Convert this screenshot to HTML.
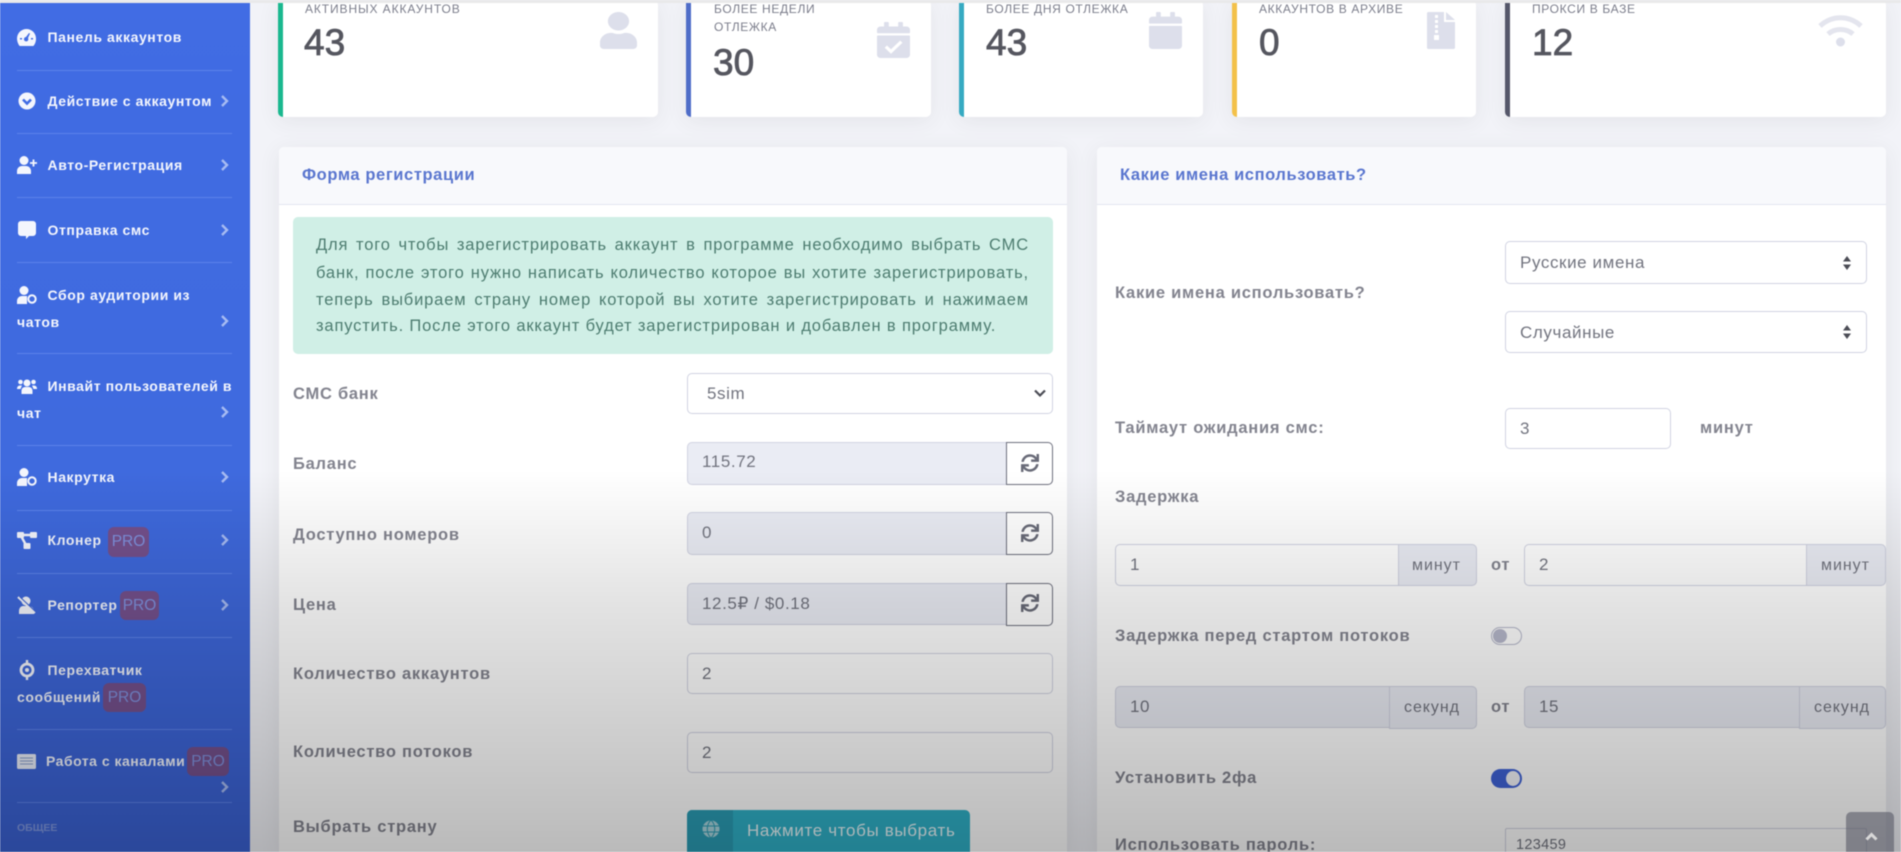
<!DOCTYPE html>
<html lang="ru"><head><meta charset="utf-8"><title>Панель</title>
<style>
*{box-sizing:border-box}
html,body{margin:0;padding:0;width:1901px;height:852px;overflow:hidden;background:#f3f4f8}
#r{position:absolute;left:0;top:0;width:1901px;height:852px;overflow:hidden;background:#f2f3f8;font-family:"Liberation Sans",sans-serif;filter:blur(.45px)}
#r div,#r svg{position:absolute}
.t{white-space:nowrap;line-height:20px;height:20px}
.sb{color:#f4f6fd;font-weight:700;font-size:14px;letter-spacing:.58px}
.dv{left:17px;width:215px;height:1px;background:#5c82ea}
.ch{left:220px;width:9px;height:14px}
.pro{background:#74508c;border-radius:6px;color:#7f92de;font-size:15.5px;text-align:center;line-height:29px}
.card{background:#fff;border-radius:5px;top:0;height:117px;box-shadow:0 4px 22px rgba(58,59,69,.08)}
.bar{left:0;top:0;width:5px;height:117px;border-radius:0 0 0 5px}
.lb{color:#7b7d8b;font-size:12px;letter-spacing:.65px}
.n{color:#55565f;font-size:37px;line-height:40px;height:40px;-webkit-text-stroke:.8px #55565f;white-space:nowrap}
.panel{background:#fff;border-radius:5px 5px 0 0;top:147px;height:705px;box-shadow:0 4px 22px rgba(58,59,69,.08)}
.ph{left:0;top:0;right:0;height:58px;background:#f8f9fc;border-bottom:1px solid #e3e6f0;border-radius:5px 5px 0 0}
.pt{color:#5a76cf;font-weight:700;font-size:16.5px;letter-spacing:.6px}
.l{color:#83848f;font-weight:700;font-size:16.5px;letter-spacing:.75px;margin-top:1px}
.inp{background:#fff;border:1px solid #d1d3e2;border-radius:5px}
.dis{background:#eaecf4}
.v{color:#72747f;font-size:17px;letter-spacing:.6px;margin-top:1px}
.rb{left:1006px;width:47px;background:#fff;border:1px solid #6e707e;border-radius:0 5px 5px 0}
.ad{background:#eaecf4;border:1px solid #d1d3e2;border-radius:0 5px 5px 0}
.a{color:#72747f;font-size:16px;letter-spacing:.95px;margin-top:1px}
.al{left:316px;width:713px;color:#4d7c70;font-size:16.5px;letter-spacing:.85px;text-align:justify;text-align-last:justify;white-space:nowrap;line-height:20px;height:20px;margin-top:1px}
</style></head><body>
<div id="r">
<div style="left:0;top:0;width:1901px;height:3px;background:#e9e9ea;z-index:5"></div>

<!-- sidebar -->
<div style="left:0;top:0;width:250px;height:852px;background:linear-gradient(180deg,#416ce4 0,#3f6ade 55%,#3b62d4 100%)"></div>
<div class="dv" style="top:70px"></div><div class="dv" style="top:133px"></div><div class="dv" style="top:197px"></div><div class="dv" style="top:262px"></div><div class="dv" style="top:353px"></div><div class="dv" style="top:445px"></div><div class="dv" style="top:510px"></div><div class="dv" style="top:573px"></div><div class="dv" style="top:637px"></div><div class="dv" style="top:729px"></div><div class="dv" style="top:802px"></div>

<svg style="left:17px;top:29px" width="19" height="17" viewBox="0 0 19 17"><path fill="#f4f6fd" d="M9.500 0A9.500 9.500 0 0 0 0 9.500c0 2.800 1 5.400 2.600 7.500h13.800A11 11 0 0 0 19 9.500 9.500 9.500 0 0 0 9.500 0z"/><path fill="#416ce4" d="M9 8l3-4 1 .5-2 4.500a2.200 2.200 0 1 1-2-1zM3 9h2v1.500H3zM14 9h2v1.500h-2z"/></svg>
<svg style="left:18px;top:92px" width="18" height="18" viewBox="0 0 18 18"><circle cx="9" cy="9" r="8.500" fill="#f4f6fd"/><path fill="none" stroke="#416ce4" stroke-width="2.600" d="M5 7.500l4 4 4-4"/></svg>
<svg style="left:17px;top:156px" width="20" height="18" viewBox="0 0 20 18"><circle cx="7" cy="4.500" r="4.500" fill="#f4f6fd"/><path fill="#f4f6fd" d="M0 18v-3c0-3 2.500-5 5-5h4c2.500 0 5 2 5 5v3z"/><path stroke="#f4f6fd" stroke-width="1.800" d="M13 7h7M16.500 3.500v7"/></svg>
<svg style="left:18px;top:221px" width="18" height="18" viewBox="0 0 18 18"><path fill="#f4f6fd" d="M3 0h12a3 3 0 0 1 3 3v9a3 3 0 0 1-3 3h-4l-3 3v-3H3a3 3 0 0 1-3-3V3a3 3 0 0 1 3-3z"/></svg>
<svg style="left:17px;top:286px" width="20" height="18" viewBox="0 0 20 18"><circle cx="7" cy="4.500" r="4.500" fill="#f4f6fd"/><path fill="#f4f6fd" d="M0 18v-3c0-3 2.500-5 5-5h5v8z"/><circle cx="15" cy="13" r="3.700" fill="none" stroke="#f4f6fd" stroke-width="2"/></svg>
<svg style="left:17px;top:378px" width="20" height="16" viewBox="0 0 20 16"><g fill="#f4f6fd"><circle cx="10" cy="5" r="3.500"/><circle cx="3.500" cy="4" r="2.300"/><circle cx="16.500" cy="4" r="2.300"/><path d="M4.500 16v-3c0-3 2-4 4-4h3c2 0 4 1 4 4v3zM0 11c0-2 1-3.500 3-3.500h2L3.500 11zM20 11c0-2-1-3.500-3-3.500h-2l1.500 3.500z"/></g></svg>
<svg style="left:17px;top:468px" width="20" height="18" viewBox="0 0 20 18"><circle cx="7" cy="4.500" r="4.500" fill="#f4f6fd"/><path fill="#f4f6fd" d="M0 18v-3c0-3 2.500-5 5-5h5v8z"/><circle cx="15" cy="13" r="3.700" fill="none" stroke="#f4f6fd" stroke-width="2"/></svg>
<svg style="left:17px;top:532px" width="20" height="17" viewBox="0 0 20 17"><g fill="#f4f6fd"><rect x="0" y="0" width="7" height="6" rx="1"/><rect x="13" y="0" width="7" height="6" rx="1"/><rect x="6.500" y="11" width="7" height="6" rx="1"/></g><path stroke="#f4f6fd" stroke-width="2.400" fill="none" d="M5 3h10M4 4l5 9"/></svg>
<svg style="left:17px;top:596px" width="20" height="18" viewBox="0 0 20 18"><circle cx="9" cy="5" r="4.500" fill="#f4f6fd"/><path fill="#f4f6fd" d="M2 18v-3c0-3 2-5 4-5h6c2 0 5 2 5 5v3z"/><path stroke="#f4f6fd" stroke-width="2.200" d="M1 1l17 16"/><path stroke="#3c64d6" stroke-width="1" d="M2.500 .500l17 16"/></svg>
<svg style="left:18px;top:660px" width="18" height="20" viewBox="0 0 18 20"><circle cx="9" cy="10" r="6" fill="none" stroke="#f4f6fd" stroke-width="2.800"/><circle cx="9" cy="10" r="2" fill="#f4f6fd"/><path stroke="#f4f6fd" stroke-width="2.400" d="M9 0v4M9 16v4"/></svg>
<svg style="left:17px;top:754px" width="19" height="15" viewBox="0 0 19 15"><rect width="19" height="15" rx="1.500" fill="#e9edf8"/><path stroke="#8ba0cc" stroke-width="1" d="M3 4h13M3 7h13M3 10h13"/></svg>

<div class="t sb" style="left:47.500px;top:27px">Панель аккаунтов</div>
<div class="t sb" style="left:47.500px;top:91px">Действие с аккаунтом</div>
<div class="t sb" style="left:47.500px;top:155px">Авто-Регистрация</div>
<div class="t sb" style="left:47.500px;top:220px">Отправка смс</div>
<div class="t sb" style="left:47.500px;top:285px">Сбор аудитории из</div>
<div class="t sb" style="left:17px;top:312px">чатов</div>
<div class="t sb" style="left:47.500px;top:376px">Инвайт пользователей в</div>
<div class="t sb" style="left:17px;top:403px">чат</div>
<div class="t sb" style="left:47.500px;top:467px">Накрутка</div>
<div class="t sb" style="left:47.500px;top:530px">Клонер</div>
<div class="t sb" style="left:47.500px;top:595px">Репортер</div>
<div class="t sb" style="left:47.500px;top:660px">Перехватчик</div>
<div class="t sb" style="left:17px;top:687px">сообщений</div>
<div class="t sb" style="left:46px;top:751px;letter-spacing:.5px">Работа с каналами</div>
<div class="t" style="left:17px;top:818px;color:#7f97e0;font-size:10.500px;font-weight:700">ОБЩЕЕ</div>

<div class="pro" style="left:108px;top:527px;width:41px;height:30px">PRO</div>
<div class="pro" style="left:120px;top:591px;width:39px;height:29px">PRO</div>
<div class="pro" style="left:103px;top:683px;width:43px;height:29px">PRO</div>
<div class="pro" style="left:187px;top:747px;width:42px;height:29px">PRO</div>

<svg class="ch" style="top:94px" viewBox="0 0 9 14"><path d="M2 2l5 5-5 5" fill="none" stroke="#a7bbf2" stroke-width="2.400"/></svg>
<svg class="ch" style="top:158px" viewBox="0 0 9 14"><path d="M2 2l5 5-5 5" fill="none" stroke="#a7bbf2" stroke-width="2.400"/></svg>
<svg class="ch" style="top:223px" viewBox="0 0 9 14"><path d="M2 2l5 5-5 5" fill="none" stroke="#a7bbf2" stroke-width="2.400"/></svg>
<svg class="ch" style="top:314px" viewBox="0 0 9 14"><path d="M2 2l5 5-5 5" fill="none" stroke="#a7bbf2" stroke-width="2.400"/></svg>
<svg class="ch" style="top:405px" viewBox="0 0 9 14"><path d="M2 2l5 5-5 5" fill="none" stroke="#a7bbf2" stroke-width="2.400"/></svg>
<svg class="ch" style="top:470px" viewBox="0 0 9 14"><path d="M2 2l5 5-5 5" fill="none" stroke="#a7bbf2" stroke-width="2.400"/></svg>
<svg class="ch" style="top:533px" viewBox="0 0 9 14"><path d="M2 2l5 5-5 5" fill="none" stroke="#a7bbf2" stroke-width="2.400"/></svg>
<svg class="ch" style="top:598px" viewBox="0 0 9 14"><path d="M2 2l5 5-5 5" fill="none" stroke="#a7bbf2" stroke-width="2.400"/></svg>
<svg class="ch" style="top:780px" viewBox="0 0 9 14"><path d="M2 2l5 5-5 5" fill="none" stroke="#a7bbf2" stroke-width="2.400"/></svg>

<!-- cards -->
<div class="card" style="left:278px;width:380px"><div class="bar" style="background:#1ab88f"></div></div>
<div class="card" style="left:686px;width:245px"><div class="bar" style="background:#4f6dc8"></div></div>
<div class="card" style="left:959px;width:244px"><div class="bar" style="background:#36aac2"></div></div>
<div class="card" style="left:1232px;width:244px"><div class="bar" style="background:#f3c14a"></div></div>
<div class="card" style="left:1505px;width:381px"><div class="bar" style="background:#55576a"></div></div>

<div class="t lb" style="left:305px;top:-1px;letter-spacing:.9px">АКТИВНЫХ АККАУНТОВ</div>
<div class="n" style="left:304px;top:23px">43</div>
<svg style="left:600px;top:12px" width="37" height="37" viewBox="0 0 448 512" preserveAspectRatio="none"><path fill="#dddfeb" d="M224 256c70.700 0 128-57.300 128-128S294.700 0 224 0 96 57.300 96 128s57.300 128 128 128zm89.600 32h-16.700c-22.200 10.200-46.900 16-72.900 16s-50.600-5.800-72.900-16h-16.700C60.200 288 0 348.200 0 422.400V464c0 26.500 21.500 48 48 48h352c26.500 0 48-21.500 48-48v-41.600c0-74.200-60.200-134.400-134.400-134.400z"/></svg>

<div class="t lb" style="left:714px;top:-1px">БОЛЕЕ НЕДЕЛИ</div>
<div class="t lb" style="left:714px;top:17px">ОТЛЕЖКА</div>
<div class="n" style="left:713px;top:43px">30</div>
<svg style="left:877px;top:22px" width="33" height="36" viewBox="0 0 448 512" preserveAspectRatio="none"><path fill="#dddfeb" d="M12 192h424c6.600 0 12 5.400 12 12v260c0 26.500-21.500 48-48 48H48c-26.500 0-48-21.500-48-48V204c0-6.600 5.400-12 12-12zm436-44v-36c0-26.500-21.500-48-48-48h-48V12c0-6.600-5.400-12-12-12h-40c-6.600 0-12 5.400-12 12v52H160V12c0-6.600-5.400-12-12-12h-40c-6.600 0-12 5.400-12 12v52H48C21.500 64 0 85.500 0 112v36c0 6.600 5.400 12 12 12h424c6.600 0 12-5.400 12-12z"/><path d="M120 350l70 70 140-140" fill="none" stroke="#fff" stroke-width="44"/></svg>

<div class="t lb" style="left:986px;top:-1px">БОЛЕЕ ДНЯ ОТЛЕЖКА</div>
<div class="n" style="left:986px;top:23px">43</div>
<svg style="left:1149px;top:12px" width="33" height="37" viewBox="0 0 448 512" preserveAspectRatio="none"><path fill="#dddfeb" d="M12 192h424c6.600 0 12 5.400 12 12v260c0 26.500-21.500 48-48 48H48c-26.500 0-48-21.500-48-48V204c0-6.600 5.400-12 12-12zm436-44v-36c0-26.500-21.500-48-48-48h-48V12c0-6.600-5.400-12-12-12h-40c-6.600 0-12 5.400-12 12v52H160V12c0-6.600-5.400-12-12-12h-40c-6.600 0-12 5.400-12 12v52H48C21.500 64 0 85.500 0 112v36c0 6.600 5.400 12 12 12h424c6.600 0 12-5.400 12-12z"/></svg>

<div class="t lb" style="left:1259px;top:-1px">АККАУНТОВ В АРХИВЕ</div>
<div class="n" style="left:1259px;top:23px">0</div>
<svg style="left:1427px;top:12px" width="28" height="37" viewBox="0 0 28 37"><path fill="#dddfeb" d="M0 1.500A1.500 1.500 0 0 1 1.500 0H17v10h11v25.500a1.500 1.500 0 0 1-1.500 1.500h-25A1.500 1.500 0 0 1 0 35.500zM19 0l9 8h-9z"/><path fill="#fff" d="M8 3h3v3H8zM8 8h3v3H8zM8 13h3v3H8zM8 18h3v3H8zM7 23h5v5H7z"/></svg>

<div class="t lb" style="left:1532px;top:-1px">ПРОКСИ В БАЗЕ</div>
<div class="n" style="left:1532px;top:23px">12</div>
<svg style="left:1818px;top:15px" width="45" height="32" viewBox="0 0 45 32"><path fill="none" stroke="#e4e5ee" stroke-width="5" d="M2 11C14 0 31 0 43 11M10 19c7-6 18-6 25 0"/><circle cx="22.500" cy="27" r="4.500" fill="#dddfeb"/></svg>

<!-- left panel -->
<div class="panel" style="left:279px;width:788px"><div class="ph"></div></div>
<div class="t pt" style="left:302px;top:165px">Форма регистрации</div>
<div style="left:293px;top:217px;width:760px;height:137px;background:#d0efe6;border-radius:5px"></div>
<div class="al" style="top:234px">Для того чтобы зарегистрировать аккаунт в программе необходимо выбрать СМС</div>
<div class="al" style="top:262px">банк, после этого нужно написать количество которое вы хотите зарегистрировать,</div>
<div class="al" style="top:289px">теперь выбираем страну номер которой вы хотите зарегистрировать и нажимаем</div>
<div class="t" style="left:316px;top:316px;color:#4d7c70;font-size:16.500px;letter-spacing:.85px">запустить. После этого аккаунт будет зарегистрирован и добавлен в программу.</div>

<div class="t l" style="left:293px;top:383px">СМС банк</div>
<div class="t l" style="left:293px;top:453px">Баланс</div>
<div class="t l" style="left:293px;top:524px">Доступно номеров</div>
<div class="t l" style="left:293px;top:594px">Цена</div>
<div class="t l" style="left:293px;top:663px">Количество аккаунтов</div>
<div class="t l" style="left:293px;top:741px">Количество потоков</div>
<div class="t l" style="left:293px;top:816px">Выбрать страну</div>

<div class="inp" style="left:687px;top:373px;width:366px;height:41px"></div>
<div class="t v" style="left:707px;top:383px">5sim</div>
<svg style="left:1034px;top:389px" width="12" height="9" viewBox="0 0 12 9"><path d="M1 1.500l5 5 5-5" fill="none" stroke="#4b4c55" stroke-width="2.200"/></svg>

<div class="inp dis" style="left:687px;top:442px;width:320px;height:43px;border-radius:5px 0 0 5px"></div>
<div class="t v" style="left:702px;top:451px">115.72</div>
<div class="rb" style="top:442px;height:43px"></div>
<svg style="left:1021px;top:454px" width="18" height="18" viewBox="0 0 512 512"><path fill="#696b78" d="M440.650 12.570l4 82.770A247.160 247.160 0 0 0 255.830 8C134.730 8 33.910 94.920 12.290 209.820A12 12 0 0 0 24.090 224h49.050a12 12 0 0 0 11.670-9.260 175.910 175.910 0 0 1 317-56.940l-101.460-4.860a12 12 0 0 0-12.570 12v47.410a12 12 0 0 0 12 12H500a12 12 0 0 0 12-12V12a12 12 0 0 0-12-12h-47.370a12 12 0 0 0-11.980 12.570zM255.830 432a175.610 175.610 0 0 1-146-77.800l101.800 4.870a12 12 0 0 0 12.570-12v-47.400a12 12 0 0 0-12-12H12a12 12 0 0 0-12 12V500a12 12 0 0 0 12 12h47.350a12 12 0 0 0 12-12.600l-4.150-82.570A247.170 247.170 0 0 0 255.830 504c121.110 0 221.930-86.920 243.550-201.820a12 12 0 0 0-11.800-14.180h-49.050a12 12 0 0 0-11.670 9.260A175.860 175.860 0 0 1 255.830 432z"/></svg>

<div class="inp dis" style="left:687px;top:512px;width:320px;height:43px;border-radius:5px 0 0 5px"></div>
<div class="t v" style="left:702px;top:522px">0</div>
<div class="rb" style="top:512px;height:43px"></div>
<svg style="left:1021px;top:524px" width="18" height="18" viewBox="0 0 512 512"><path fill="#696b78" d="M440.650 12.570l4 82.770A247.160 247.160 0 0 0 255.830 8C134.730 8 33.910 94.920 12.290 209.820A12 12 0 0 0 24.090 224h49.050a12 12 0 0 0 11.670-9.260 175.910 175.910 0 0 1 317-56.940l-101.460-4.860a12 12 0 0 0-12.570 12v47.410a12 12 0 0 0 12 12H500a12 12 0 0 0 12-12V12a12 12 0 0 0-12-12h-47.370a12 12 0 0 0-11.980 12.570zM255.830 432a175.610 175.610 0 0 1-146-77.800l101.800 4.870a12 12 0 0 0 12.570-12v-47.400a12 12 0 0 0-12-12H12a12 12 0 0 0-12 12V500a12 12 0 0 0 12 12h47.350a12 12 0 0 0 12-12.600l-4.150-82.570A247.170 247.170 0 0 0 255.830 504c121.110 0 221.930-86.920 243.550-201.820a12 12 0 0 0-11.800-14.180h-49.050a12 12 0 0 0-11.670 9.260A175.860 175.860 0 0 1 255.830 432z"/></svg>

<div class="inp dis" style="left:687px;top:583px;width:320px;height:42px;border-radius:5px 0 0 5px"></div>
<div class="t v" style="left:702px;top:593px">12.5₽ / $0.18</div>
<div class="rb" style="top:583px;height:43px"></div>
<svg style="left:1021px;top:594px" width="18" height="18" viewBox="0 0 512 512"><path fill="#696b78" d="M440.650 12.570l4 82.770A247.160 247.160 0 0 0 255.830 8C134.730 8 33.910 94.920 12.290 209.820A12 12 0 0 0 24.090 224h49.050a12 12 0 0 0 11.670-9.260 175.910 175.910 0 0 1 317-56.940l-101.460-4.860a12 12 0 0 0-12.570 12v47.410a12 12 0 0 0 12 12H500a12 12 0 0 0 12-12V12a12 12 0 0 0-12-12h-47.370a12 12 0 0 0-11.980 12.570zM255.830 432a175.610 175.610 0 0 1-146-77.800l101.800 4.870a12 12 0 0 0 12.570-12v-47.400a12 12 0 0 0-12-12H12a12 12 0 0 0-12 12V500a12 12 0 0 0 12 12h47.350a12 12 0 0 0 12-12.600l-4.150-82.570A247.170 247.170 0 0 0 255.830 504c121.110 0 221.930-86.920 243.550-201.820a12 12 0 0 0-11.800-14.180h-49.050a12 12 0 0 0-11.670 9.260A175.860 175.860 0 0 1 255.830 432z"/></svg>

<div class="inp" style="left:687px;top:653px;width:366px;height:41px"></div>
<div class="t v" style="left:702px;top:663px">2</div>
<div class="inp" style="left:687px;top:732px;width:366px;height:41px"></div>
<div class="t v" style="left:702px;top:742px">2</div>

<div style="left:687px;top:810px;width:283px;height:42px;background:#2fb0c7;border-radius:5px 5px 0 0"></div>
<div style="left:687px;top:810px;width:46px;height:42px;background:#2a9cb4;border-radius:5px 0 0 0"></div>
<svg style="left:702px;top:820px" width="18" height="18" viewBox="0 0 18 18"><circle cx="9" cy="9" r="8.500" fill="#a9d5de"/><path fill="none" stroke="#2a9cb4" stroke-width="1" d="M0 6h18M0 12h18M9 0c-5 5-5 13 0 18M9 0c5 5 5 13 0 18"/></svg>
<div class="t" style="left:747px;top:821px;color:#e6f5f8;font-size:17px;letter-spacing:.65px">Нажмите чтобы выбрать</div>

<!-- right panel -->
<div class="panel" style="left:1097px;width:789px"><div class="ph"></div></div>
<div class="t pt" style="left:1120px;top:165px">Какие имена использовать?</div>
<div class="t l" style="left:1115px;top:282px">Какие имена использовать?</div>

<div class="inp" style="left:1505px;top:241px;width:362px;height:43px"></div>
<div class="t v" style="left:1520px;top:252px">Русские имена</div>
<svg style="left:1843px;top:256px" width="8" height="14" viewBox="0 0 8 14"><path fill="#4b4c55" d="M4 0l4 5.500H0zM4 14l4-5.500H0z"/></svg>
<div class="inp" style="left:1505px;top:311px;width:362px;height:42px"></div>
<div class="t v" style="left:1520px;top:322px">Случайные</div>
<svg style="left:1843px;top:325px" width="8" height="14" viewBox="0 0 8 14"><path fill="#4b4c55" d="M4 0l4 5.500H0zM4 14l4-5.500H0z"/></svg>

<div class="t l" style="left:1115px;top:417px">Таймаут ожидания смс:</div>
<div class="inp" style="left:1505px;top:408px;width:166px;height:41px"></div>
<div class="t v" style="left:1520px;top:418px">3</div>
<div class="t l" style="left:1700px;top:417px">минут</div>

<div class="t l" style="left:1115px;top:486px">Задержка</div>
<div class="inp" style="left:1115px;top:544px;width:284px;height:42px;border-radius:5px 0 0 5px"></div>
<div class="t v" style="left:1130px;top:554px">1</div>
<div class="ad" style="left:1398px;top:544px;width:79px;height:42px"></div>
<div class="t a" style="left:1412px;top:555px">минут</div>
<div class="t l" style="left:1491px;top:554px">от</div>
<div class="inp" style="left:1524px;top:544px;width:283px;height:42px;border-radius:5px 0 0 5px"></div>
<div class="t v" style="left:1539px;top:554px">2</div>
<div class="ad" style="left:1806px;top:544px;width:80px;height:42px"></div>
<div class="t a" style="left:1821px;top:555px">минут</div>

<div class="t l" style="left:1115px;top:625px">Задержка перед стартом потоков</div>
<div style="left:1491px;top:627px;width:31px;height:18px;border:1px solid #b7b9cc;border-radius:9px;background:#fff"></div>
<div style="left:1493px;top:629px;width:14px;height:14px;border-radius:50%;background:#b7b9cc"></div>

<div class="inp dis" style="left:1115px;top:686px;width:275px;height:42px;border-radius:5px 0 0 5px"></div>
<div class="t v" style="left:1130px;top:696px">10</div>
<div class="ad" style="left:1389px;top:686px;width:88px;height:43px"></div>
<div class="t a" style="left:1404px;top:697px">секунд</div>
<div class="t l" style="left:1491px;top:696px">от</div>
<div class="inp dis" style="left:1524px;top:686px;width:276px;height:42px;border-radius:5px 0 0 5px"></div>
<div class="t v" style="left:1539px;top:696px">15</div>
<div class="ad" style="left:1799px;top:686px;width:87px;height:43px"></div>
<div class="t a" style="left:1814px;top:697px">секунд</div>

<div class="t l" style="left:1115px;top:767px">Установить 2фа</div>
<div style="left:1491px;top:769px;width:31px;height:19px;border-radius:10px;background:#3f62d6"></div>
<div style="left:1506px;top:771px;width:14px;height:15px;border-radius:50%;background:#f2f3f8"></div>

<div class="t l" style="left:1115px;top:834px">Использовать пароль:</div>
<div class="inp" style="left:1505px;top:828px;width:362px;height:24px;border-bottom:0;border-radius:2px 2px 0 0"></div>
<div class="t" style="left:1516px;top:835px;color:#72747f;font-size:14.500px;letter-spacing:.3px">123459</div>

<!-- scroll top -->
<div style="left:1846px;top:812px;width:48px;height:40px;background:rgba(90,92,105,.62);border-radius:5px 5px 0 0;z-index:6"></div>
<svg style="left:1865px;top:832px;z-index:6" width="13" height="9" viewBox="0 0 13 9"><path d="M1.500 7.500l5-5 5 5" fill="none" stroke="#d8d8d8" stroke-width="3"/></svg>

<!-- video-player bottom shade -->
<div style="left:0;top:470px;width:1901px;height:382px;background:linear-gradient(180deg,rgba(0,0,0,0) 0,rgba(0,0,0,.11) 35%,rgba(0,0,0,.2) 72%,rgba(0,0,0,.27) 100%);z-index:4"></div>
</div>
</body></html>
